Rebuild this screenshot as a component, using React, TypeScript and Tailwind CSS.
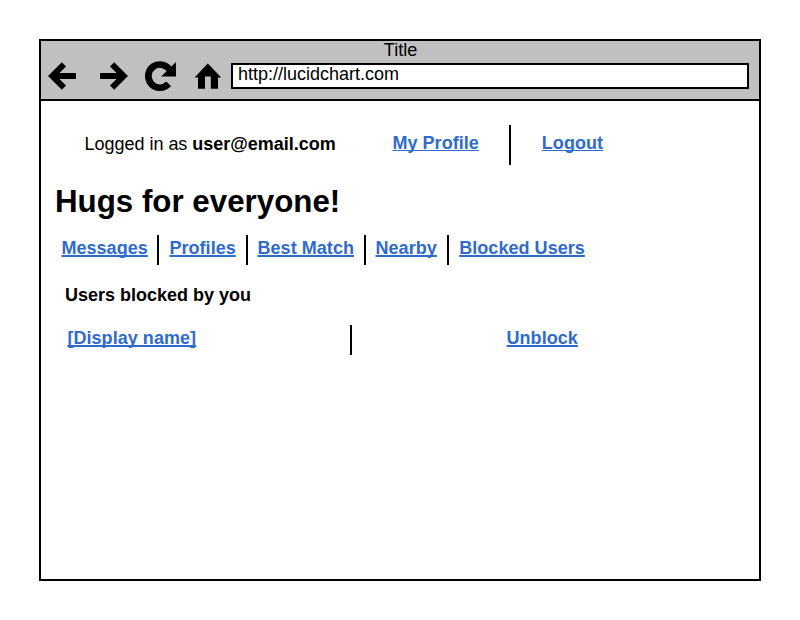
import type { ReactNode } from "react";

function Divider({ className = "" }: { className?: string }) {
  return <div className={`w-0.5 shrink-0 self-stretch bg-black ${className}`} />;
}

function TextLink({ children, className = "", thin = false }: { children: ReactNode; className?: string; thin?: boolean }) {
  return (
    <a
      href="#"
      className={`shrink-0 whitespace-nowrap font-bold leading-5 tracking-[0.05px] text-[#2f6bcc] underline underline-offset-1 [text-decoration-skip-ink:none] ${
        thin ? "decoration-1" : "decoration-2"
      } ${className}`}
    >
      {children}
    </a>
  );
}

function BrowserBar() {
  return (
    <header className="h-[60px] border-b-2 border-black bg-[#c0c0c0]">
      <div className="h-[18px] pl-px text-center leading-[18px]">Title</div>
      <div className="flex">
        <svg className="h-9 w-[186px] shrink-0" viewBox="41 59 186 36" fill="black">
          <path d="M48 76 61.8 62.2 66 66.4 59.4 73H76V79H59.4L66 85.6 61.8 89.8Z" />
          <path d="M128 76 114.2 62.2 110 66.4 116.6 73H100V79H116.6L110 85.6 114.2 89.8Z" />
          <path d="M168.6 83.8A11.6 11.6 0 1 1 170.4 71.2" fill="none" stroke="black" strokeWidth="6.7" />
          <path d="M176 62V76.4H161.2Z" />
          <path d="M207.8 63.5 221.2 77.5H218V88.8H210.8V76.5H205V88.8H198V77.5H194.6Z" />
        </svg>
        <div className="ml-1 mt-1 h-[26px] w-[518px] border-2 border-black bg-white pl-[5px] leading-[18px]">
          http://lucidchart.com
        </div>
      </div>
    </header>
  );
}

export default function App() {
  return (
    <div className="h-[620px] w-[800px] bg-white p-[39px] font-['Liberation_Sans',Arial,sans-serif] text-[18px] text-black">
      <div className="h-[542px] w-[722px] border-2 border-black">
        <BrowserBar />
        <main>
          <div className="mt-6 flex h-10 items-start">
            <div className="ml-[43.5px] mt-[9px] w-[307.5px] shrink-0 whitespace-nowrap leading-5 tracking-[-0.02px]">
              Logged in as <b>user@email.com</b>
            </div>
            <div className="w-[117px] shrink-0 pl-[0.4px] pt-2 leading-5">
              <TextLink thin>My Profile</TextLink>
            </div>
            <Divider />
            <TextLink thin className="ml-[30.8px] mt-2">Logout</TextLink>
          </div>
          <h1 className="ml-3.5 mt-[19px] h-9 whitespace-nowrap text-[31.3px] font-bold leading-9">Hugs for everyone!</h1>
          <nav className="mt-[15px] flex h-[30px] items-start pl-5">
            <div className="w-24 shrink-0 pl-[0.4px] pt-[3px] leading-5"><TextLink>Messages</TextLink></div>
            <Divider />
            <div className="w-[87px] shrink-0 pl-[10.4px] pt-[3px] leading-5"><TextLink>Profiles</TextLink></div>
            <Divider />
            <div className="w-[116px] shrink-0 pl-[9.5px] pt-[3px] leading-5"><TextLink>Best Match</TextLink></div>
            <Divider />
            <div className="w-[81px] shrink-0 pl-[9.5px] pt-[3px] leading-5"><TextLink>Nearby</TextLink></div>
            <Divider />
            <TextLink className="ml-[10.2px] mt-[3px]">Blocked Users</TextLink>
          </nav>
          <h2 className="ml-6 mt-5 h-5 font-bold leading-5">Users blocked by you</h2>
          <div className="mt-5 flex h-[30px] items-start pl-[26px]">
            <div className="w-[283px] shrink-0 pl-[0.4px] pt-[3px] leading-5"><TextLink>[Display name]</TextLink></div>
            <Divider />
            <TextLink className="ml-[154.5px] mt-[3px]">Unblock</TextLink>
          </div>
        </main>
      </div>
    </div>
  );
}
